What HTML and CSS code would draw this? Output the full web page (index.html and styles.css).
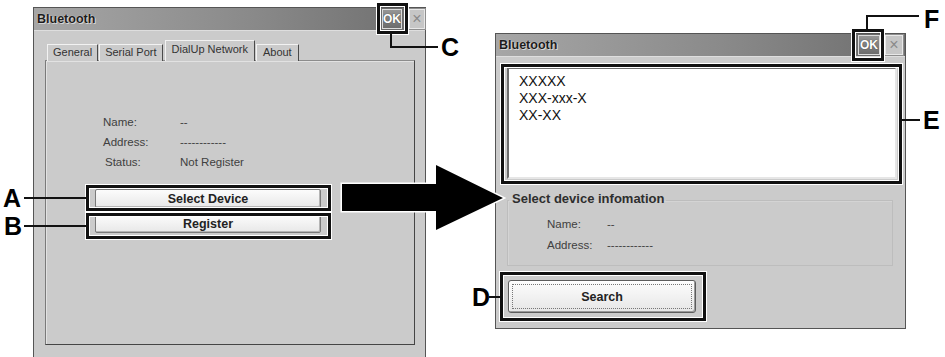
FILE: index.html
```html
<!DOCTYPE html>
<html lang="en">
<head>
<meta charset="utf-8">
<title>Bluetooth</title>
<link rel="stylesheet" href="styles.css">
</head>
<body>
<div class="canvas">
  <section class="win win-left">
    <header class="titlebar">
      <span class="title">Bluetooth</span>
      <span class="tb-btns"><span class="ok">OK</span><span class="close">×</span></span>
    </header>
    <div class="win-body">
      <div class="tabs">
        <span class="tab">General</span>
        <span class="tab">Serial Port</span>
        <span class="tab active">DialUp Network</span>
        <span class="tab">About</span>
      </div>
      <div class="panel">
        <dl class="info">
          <dt>Name:</dt><dd>--</dd>
          <dt>Address:</dt><dd>------------</dd>
          <dt class="st">Status:</dt><dd>Not Register</dd>
        </dl>
        <div class="btn-col">
          <button class="btn">Select Device</button>
          <button class="btn">Register</button>
        </div>
      </div>
    </div>
  </section>

  <section class="win win-right">
    <header class="titlebar">
      <span class="title">Bluetooth</span>
      <span class="tb-btns"><span class="ok">OK</span><span class="close">×</span></span>
    </header>
    <div class="win-body2">
      <div class="textbox">XXXXX<br>XXX-xxx-X<br>XX-XX</div>
      <fieldset class="group">
        <legend>Select device infomation</legend>
        <dl class="info info2">
          <dt>Name:</dt><dd>--</dd>
          <dt>Address:</dt><dd>------------</dd>
        </dl>
      </fieldset>
      <button class="search"><span class="focus">Search</span></button>
    </div>
  </section>

  <svg class="overlay" width="945" height="357" viewBox="0 0 945 357" aria-hidden="true">
    <g class="halo">
      <rect x="378.5" y="4.5" width="28" height="28"/>
      <rect x="87.5" y="186.5" width="242" height="23"/>
      <rect x="87.5" y="214.5" width="242" height="23"/>
      <rect x="853.5" y="30.5" width="29" height="29"/>
      <rect x="502.5" y="65.5" width="398" height="117"/>
      <rect x="501.5" y="273.5" width="203" height="46"/>
    </g>
    <g class="box">
      <rect x="378.5" y="4.5" width="28" height="28"/>
      <rect x="87.5" y="186.5" width="242" height="23"/>
      <rect x="87.5" y="214.5" width="242" height="23"/>
      <rect x="853.5" y="30.5" width="29" height="29"/>
      <rect x="502.5" y="65.5" width="398" height="117"/>
      <rect x="501.5" y="273.5" width="203" height="46"/>
    </g>
    <g class="lead">
      <path d="M391 34 V47 H438"/>
      <path d="M24 198 H87"/>
      <path d="M24 226 H87"/>
      <path d="M867 30 V16 H919"/>
      <path d="M902 120 H920"/>
      <path d="M489 297 H501"/>
    </g>
    <polygon class="arrow" points="342,184 436,184 436,165 503,198 436,230 436,211 342,211"/>
  </svg>

  <span class="callout c-a">A</span>
  <span class="callout c-b">B</span>
  <span class="callout c-c">C</span>
  <span class="callout c-d">D</span>
  <span class="callout c-e">E</span>
  <span class="callout c-f">F</span>
</div>
</body>
</html>
```

FILE: styles.css
```css
* { box-sizing: border-box; }
html, body { margin: 0; padding: 0; background: #fff; }
body { font-family: "Liberation Sans", Arial, sans-serif; }

.canvas { position: relative; width: 945px; height: 357px; overflow: hidden; }

.win {
  position: absolute;
  background: #cbcbcb;
  border: 1px solid #555;
  display: flex;
  flex-direction: column;
}
.win-left { left: 33px; top: 7px; width: 393px; height: 370px; }
.win-right { left: 495px; top: 33px; width: 411px; height: 296px; }

.titlebar {
  height: 23px;
  flex: none;
  display: flex;
  align-items: center;
  justify-content: space-between;
  padding: 0 0 0 3px;
  background: linear-gradient(to right, #a6a6a6, #8a8a8a 55%, #6e6e6e);
  border-bottom: 1px solid #dedede;
}
.win-right .titlebar { padding-right: 2px; }
.title {
  font-weight: bold;
  font-size: 12.5px;
  color: #1c1c1c;
  text-shadow: 1px 1px 0 #d6d6d6, 0 0 1px #eee;
}
.tb-btns { display: flex; align-items: center; gap: 7px; }
.win-right .tb-btns { gap: 5px; }
.ok {
  width: 20px; height: 20px;
  display: flex; align-items: center; justify-content: center;
  background: linear-gradient(#959595, #6c6c6c);
  border: 1px solid #dcdcdc;
  box-shadow: 0 0 0 1px #6a6a6a;
  color: #fff;
  font-weight: bold;
  font-size: 12px;
  text-shadow: 0 0 1px #333;
}
.win-right .ok { width: 22px; }
.close {
  width: 16px; height: 20px;
  display: flex; align-items: center; justify-content: center;
  background: #c6c6c6;
  border: 1px solid #e8e8e8;
  box-shadow: 0 0 0 1px #8e8e8e;
  color: #8a8a8a;
  font-size: 16px;
  line-height: 1;
}
.win-right .close { width: 18px; }

/* left window */
.win-body { padding: 10px 10px 0 11px; display: flex; flex-direction: column; }
.tabs { display: flex; align-items: flex-end; height: 20px; padding-left: 2px; position: relative; z-index: 1; margin-bottom: -1px; }
.tab {
  height: 17px;
  padding: 0 5px;
  font-size: 11px;
  line-height: 15px;
  color: #333;
  background: #cbcbcb;
  border: 1px solid;
  border-color: #f2f2f2 #4a4a4a transparent #f2f2f2;
  border-bottom: 0;
  margin-right: 1px;
}
.tab.active { height: 21px; padding: 0 6px; line-height: 16px; margin: 0 1px 0 1px; }
.tab:last-child { padding: 0 6px; }

.panel {
  height: 285px;
  border: 1px solid;
  border-color: #8c8c8c #454545 #454545 #7a7a7a;
  box-shadow: inset 1px 1px 0 #e2e2e2;
  padding: 51px 0 0 49px;
}
.info {
  margin: 0 0 0 8px;
  display: grid;
  grid-template-columns: 77px auto;
  font-size: 11.5px;
  line-height: 20px;
  color: #404040;
}
.info dt, .info dd { margin: 0; }
.info .st { padding-left: 2px; }

.btn-col { display: flex; flex-direction: column; gap: 6px; margin-top: 17px; width: 226px; }
.btn {
  height: 19px;
  padding: 0;
  font-family: "Liberation Sans", Arial, sans-serif;
  font-weight: bold;
  font-size: 12.5px;
  color: #222;
  background: linear-gradient(#fcfcfc, #e8e8e8);
  border: 1px solid #7a7a7a;
  border-radius: 2px;
  box-shadow: inset -1px -1px 0 #b5b5b5;
}

/* right window */
.win-body2 { padding: 10px 8px 0 11px; display: flex; flex-direction: column; align-items: flex-start; }
.textbox {
  width: 390px;
  height: 112px;
  background: #fff;
  border: 2px solid;
  border-color: #6e6e6e #e6e6e6 #e6e6e6 #6e6e6e;
  padding: 4px 10px;
  font-size: 14px;
  line-height: 17px;
  color: #111;
}
.group {
  width: 386px;
  margin: 12px 0 0 0;
  padding: 0 0 9px 0;
  border: 1px solid #bdbdbd;
  box-shadow: inset 1px 1px 0 #d4d4d4;
  min-width: 0;
}
.group legend {
  margin-left: 1px;
  padding: 0 2px 4px 3px;
  font-size: 13px;
  line-height: 15px;
  font-weight: bold;
  color: #2e2e2e;
}
.info2 { margin: 4px 0 0 39px; grid-template-columns: 60px auto; line-height: 21px; }

.search {
  margin: 14px 0 0 1px;
  width: 188px;
  height: 33px;
  padding: 3px;
  font-family: "Liberation Sans", Arial, sans-serif;
  font-weight: bold;
  font-size: 12.5px;
  color: #222;
  background: linear-gradient(#fdfdfd, #e6e6e6);
  border: 1px solid #5c5c5c;
  border-radius: 3px;
  box-shadow: inset -1px -1px 0 #9a9a9a, inset 1px 1px 0 #fff;
}
.search .focus {
  display: flex; align-items: center; justify-content: center;
  height: 100%;
  border: 1px dotted #777;
}

/* annotation overlay */
.overlay { position: absolute; left: 0; top: 0; pointer-events: none; }
.halo rect { fill: none; stroke: #fff; stroke-width: 5; }
.box rect { fill: none; stroke: #111; stroke-width: 3; }
.lead path { fill: none; stroke: #111; stroke-width: 2; }
.arrow { fill: #000; stroke: #fff; stroke-width: 3; paint-order: stroke; stroke-linejoin: miter; }

.callout {
  position: absolute;
  font-family: "Liberation Sans", Arial, sans-serif;
  font-weight: bold;
  font-size: 25px;
  line-height: 25px;
  color: #000;
}
.c-a { left: 3px; top: 186px; }
.c-b { left: 4px; top: 214px; }
.c-c { left: 441px; top: 35px; }
.c-d { left: 472px; top: 285px; }
.c-e { left: 923px; top: 108px; }
.c-f { left: 924px; top: 7px; }
```
